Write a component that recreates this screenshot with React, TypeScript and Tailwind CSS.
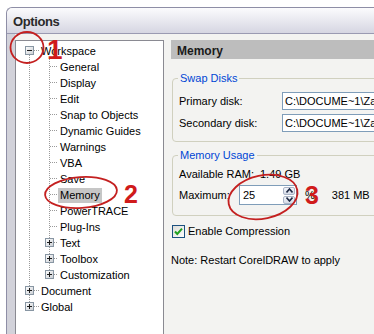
import React from "react";

type Row = {
  label: string;
  level: 0 | 1;
  box?: "+" | "-";
  selected?: boolean;
  last?: boolean;
};

const rows: Row[] = [
  { label: "Workspace", level: 0, box: "-" },
  { label: "General", level: 1 },
  { label: "Display", level: 1 },
  { label: "Edit", level: 1 },
  { label: "Snap to Objects", level: 1 },
  { label: "Dynamic Guides", level: 1 },
  { label: "Warnings", level: 1 },
  { label: "VBA", level: 1 },
  { label: "Save", level: 1 },
  { label: "Memory", level: 1, selected: true },
  { label: "PowerTRACE", level: 1 },
  { label: "Plug-Ins", level: 1 },
  { label: "Text", level: 1, box: "+" },
  { label: "Toolbox", level: 1, box: "+" },
  { label: "Customization", level: 1, box: "+", last: true },
  { label: "Document", level: 0, box: "+" },
  { label: "Global", level: 0, box: "+", last: true },
];

const DOT = "#9a9a9a";

const ExpandBox = ({ x, sign }: { x: number; sign: "+" | "-" }) => (
  <g>
    <rect x={x + 0.5} y={3.5} width={8} height={8} fill="url(#boxfill)" stroke="#8896a3" />
    <line x1={x + 2} y1={7.5} x2={x + 7} y2={7.5} stroke="#1a1a1a" />
    {sign === "+" && <line x1={x + 4.5} y1={5} x2={x + 4.5} y2={10} stroke="#1a1a1a" />}
  </g>
);

const VLine = ({ x, y1, y2 }: { x: number; y1: number; y2: number }) => (
  <line x1={x} y1={y1} x2={x} y2={y2} stroke={DOT} strokeDasharray="1 1" />
);

const HLine = ({ x1, x2 }: { x1: number; x2: number }) => (
  <line x1={x1} y1={7.5} x2={x2} y2={7.5} stroke={DOT} strokeDasharray="1 1" />
);

const Gutter = ({ row }: { row: Row }) => {
  if (row.level === 0) {
    const isFirst = row.label === "Workspace";
    return (
      <svg width={23} height={16} shapeRendering="crispEdges" className="shrink-0">
        {!isFirst && <VLine x={13.5} y1={0} y2={3} />}
        {!row.last && <VLine x={13.5} y1={12} y2={16} />}
        <HLine x1={18} x2={23} />
        <ExpandBox x={9} sign={row.box ?? "+"} />
      </svg>
    );
  }
  return (
    <svg width={42} height={16} shapeRendering="crispEdges" className="shrink-0">
      <VLine x={13.5} y1={0} y2={16} />
      {row.box ? (
        <>
          <VLine x={33.5} y1={0} y2={3} />
          {!row.last && <VLine x={33.5} y1={12} y2={16} />}
          <HLine x1={38} x2={42} />
          <ExpandBox x={29} sign={row.box} />
        </>
      ) : (
        <>
          <VLine x={33.5} y1={0} y2={row.last ? 8 : 16} />
          <HLine x1={34} x2={42} />
        </>
      )}
    </svg>
  );
};

const SpinArrow = ({ up }: { up?: boolean }) => (
  <svg width={7} height={5} viewBox="0 0 7 5">
    <path
      d={up ? "M0.5 4.5 L3.5 1 L6.5 4.5" : "M0.5 0.5 L3.5 4 L6.5 0.5"}
      fill="none"
      stroke="#1e2a44"
      strokeWidth={1.6}
    />
  </svg>
);

export default function App() {
  return (
    <div className="relative w-[374px] h-[334px] overflow-hidden bg-white font-['Liberation_Sans',Arial,sans-serif] text-[11px] text-black">
      <svg width={0} height={0} className="absolute">
        <defs>
          <linearGradient id="boxfill" x1="0" y1="0" x2="1" y2="1">
            <stop offset="0" stopColor="#ffffff" />
            <stop offset="1" stopColor="#c9cdd2" />
          </linearGradient>
          <linearGradient id="chkfill" x1="0" y1="0" x2="1" y2="1">
            <stop offset="0" stopColor="#dcdcd7" />
            <stop offset="1" stopColor="#ffffff" />
          </linearGradient>
        </defs>
      </svg>

      <div className="ml-[6px] mt-[7px] h-[360px] border-l border-t border-[#8e8ea6] rounded-tl-[6px] flex flex-col bg-[#f3f3f1]">
        {/* title bar */}
        <div className="h-[26px] shrink-0 rounded-tl-[6px] border-b border-[#9a9ab2] bg-gradient-to-b from-[#fbfbfd] to-[#d6d6e2] flex items-center pl-[6px] pt-[3px]">
          <span className="text-[13px] font-bold tracking-[-0.4px] text-[#2a2a2a]">Options</span>
        </div>

        <div className="flex flex-1 min-h-0">
          {/* left frame strip */}
          <div className="w-[8px] shrink-0 bg-[#d2d2da]" />

          {/* tree panel */}
          <div className="mt-[6px] w-[149px] shrink-0 border border-[#8a8a92] bg-white pt-[2px]">
            {rows.map((row) => (
              <div key={row.label} className="flex h-4 items-center">
                <Gutter row={row} />
                <span
                  className={`px-[2px] leading-[15px] whitespace-nowrap ${
                    row.selected ? "bg-[#c6c6c6]" : ""
                  }`}
                >
                  {row.label}
                </span>
              </div>
            ))}
          </div>

          {/* right panel */}
          <div className="flex-1 min-w-0 pl-[7px] pt-[6px]">
            <div className="h-[19px] bg-[#bdbdbd] flex items-center pl-[6px] pt-[2px]">
              <span className="text-[12px] font-bold text-[#1a1a1a]">Memory</span>
            </div>

            {/* Swap Disks */}
            <div className="ml-px -mr-[20px] mt-[19px] border border-[#d0d0bf] rounded-[4px] pb-[9px]">
              <div className="-mt-[8px] ml-[5px] w-fit px-[2px] bg-[#f3f3f1] leading-[14px] text-[#0046d5]">
                Swap Disks
              </div>
              <div className="mt-[7px] flex h-[18px] items-center">
                <span className="w-[109px] shrink-0 pl-[6px]">Primary disk:</span>
                <div className="flex-1 h-[18px] border border-[#7f9db9] bg-white pl-[2px] flex items-center whitespace-nowrap overflow-hidden">
                  C:\DOCUME~1\Zaid\LOCALS~1\Temp
                </div>
              </div>
              <div className="mt-[4px] flex h-[18px] items-center">
                <span className="w-[109px] shrink-0 pl-[6px]">Secondary disk:</span>
                <div className="flex-1 h-[18px] border border-[#7f9db9] bg-white pl-[2px] flex items-center whitespace-nowrap overflow-hidden">
                  C:\DOCUME~1\Zaid\LOCALS~1\Temp
                </div>
              </div>
            </div>

            {/* Memory Usage */}
            <div className="ml-px -mr-[20px] mt-[13px] border border-[#d0d0bf] rounded-[4px] pb-[10px]">
              <div className="-mt-[8px] ml-[5px] w-fit px-[2px] bg-[#f3f3f1] leading-[14px] text-[#0046d5]">
                Memory Usage
              </div>
              <div className="mt-[4px] flex h-4 items-center">
                <span className="w-[87px] shrink-0 pl-[6px]">Available RAM:</span>
                <span>1.49 GB</span>
              </div>
              <div className="mt-[3px] flex h-[20px] items-center">
                <span className="w-[66px] shrink-0 pl-[6px]">Maximum:</span>
                <div className="w-[58px] h-[20px] border border-[#7f9db9] bg-white flex items-center justify-between pl-[3px] pr-px">
                  <span>25</span>
                  <div className="flex flex-col gap-px">
                    <div className="w-[12px] h-[8px] rounded-[2px] border border-[#aab4c6] bg-gradient-to-b from-[#f4f6fb] to-[#d5dbe7] flex items-center justify-center">
                      <SpinArrow up />
                    </div>
                    <div className="w-[12px] h-[8px] rounded-[2px] border border-[#aab4c6] bg-gradient-to-b from-[#f4f6fb] to-[#d5dbe7] flex items-center justify-center">
                      <SpinArrow />
                    </div>
                  </div>
                </div>
                <span className="ml-[8px]">%</span>
                <span className="ml-[17px]">381 MB</span>
              </div>
            </div>

            {/* Enable Compression */}
            <div className="ml-px mt-[8px] flex items-center gap-[3px]">
              <svg width={13} height={13} shapeRendering="crispEdges">
                <rect x={0.5} y={0.5} width={12} height={12} fill="url(#chkfill)" stroke="#1c5180" />
                <path
                  d="M3 6.5 L5.3 9 L10 3.6"
                  fill="none"
                  stroke="#21a121"
                  strokeWidth={2}
                  shapeRendering="geometricPrecision"
                />
              </svg>
              <span className="leading-[14px]">Enable Compression</span>
            </div>

            <div className="mt-[15px] leading-[14px]">Note: Restart CorelDRAW to apply</div>
          </div>
        </div>
      </div>

      {/* annotations */}
      <svg className="absolute inset-0 pointer-events-none" width={374} height={334}>
        <ellipse cx={27} cy={47.5} rx={16.5} ry={15.5} fill="none" stroke="#c42020" strokeWidth={1.8} />
        <ellipse
          cx={81}
          cy={192.5}
          rx={36}
          ry={15.5}
          fill="none"
          stroke="#c42020"
          strokeWidth={1.8}
          transform="rotate(-4 81 192.5)"
        />
        <ellipse
          cx={263}
          cy={197}
          rx={35}
          ry={21.5}
          fill="none"
          stroke="#c42020"
          strokeWidth={1.8}
          transform="rotate(-12 263 197)"
        />
      </svg>
      <span className="absolute left-[47px] top-[36px] text-[28px] leading-none font-bold text-[#d01b1b]">1</span>
      <span className="absolute left-[124px] top-[182px] text-[25px] leading-none font-bold text-[#d01b1b]">2</span>
      <span className="absolute left-[305px] top-[183px] text-[25px] leading-none font-bold text-[#d01b1b]">3</span>
    </div>
  );
}
